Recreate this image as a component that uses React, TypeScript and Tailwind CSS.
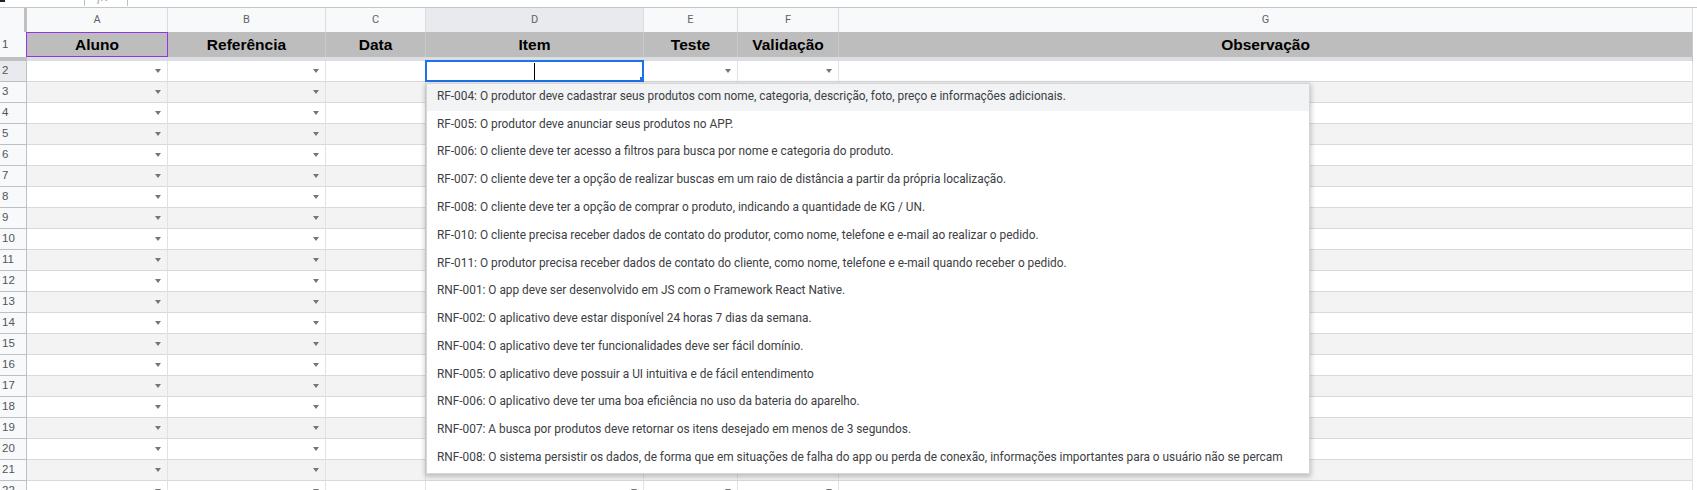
import React from 'react';

const widths = [27, 141, 158, 100, 218, 94, 101, 854];
const letters = ['', 'A', 'B', 'C', 'D', 'E', 'F', 'G'];
const titles = ['Aluno', 'Referência', 'Data', 'Item', 'Teste', 'Validação', 'Observação'];
// columns that carry a dropdown chip (index into widths)
const withArrow = [1, 2, 4, 5, 6];

const items = [
  'RF-004: O produtor deve cadastrar seus produtos com nome, categoria, descrição, foto, preço e informações adicionais.',
  'RF-005: O produtor deve anunciar seus produtos no APP.',
  'RF-006: O cliente deve ter acesso a filtros para busca por nome e categoria do produto.',
  'RF-007: O cliente deve ter a opção de realizar buscas em um raio de distância a partir da própria localização.',
  'RF-008: O cliente deve ter a opção de comprar o produto, indicando a quantidade de KG / UN.',
  'RF-010: O cliente precisa receber dados de contato do produtor, como nome, telefone e e-mail ao realizar o pedido.',
  'RF-011: O produtor precisa receber dados de contato do cliente, como nome, telefone e e-mail quando receber o pedido.',
  'RNF-001: O app deve ser desenvolvido em JS com o Framework React Native.',
  'RNF-002: O aplicativo deve estar disponível 24 horas 7 dias da semana.',
  'RNF-004: O aplicativo deve ter funcionalidades deve ser fácil domínio.',
  'RNF-005: O aplicativo deve possuir a UI intuitiva e de fácil entendimento',
  'RNF-006: O aplicativo deve ter uma boa eficiência no uso da bateria do aparelho.',
  'RNF-007: A busca por produtos deve retornar os itens desejado em menos de 3 segundos.',
  'RNF-008: O sistema persistir os dados, de forma que em situações de falha do app ou perda de conexão, informações importantes para o usuário não se percam',
];

function Arrow() {
  return <div className="h-0 w-0 border-x-[3.5px] border-t-[4px] border-x-transparent border-t-[#757575]" />;
}

function DataRow({ n }: { n: number }) {
  const band = n % 2 === 1 ? 'bg-[#f3f3f3]' : 'bg-white';
  return (
    <div className="flex h-[21px]">
      <div
        style={{ width: widths[0] }}
        className={`flex shrink-0 items-center border-r border-b border-[#c0c0c0] pl-[2px] text-[11.5px] text-[#555] ${n === 2 ? 'bg-[#e8eaed]' : 'bg-[#f8f9fa]'}`}
      >
        {n}
      </div>
      {widths.slice(1).map((w, i) => {
        const col = i + 1;
        const editing = n === 2 && col === 4;
        return (
          <div
            key={col}
            style={{ width: w }}
            className={`relative flex shrink-0 items-center justify-end border-r border-b border-r-[#e2e2e2] border-b-[#dadada] pr-[6px] ${editing ? 'bg-white' : band}`}
          >
            {withArrow.includes(col) && !editing && <Arrow />}
            {editing && (
              <div className="absolute -top-[1px] -left-[1px] -right-[1px] -bottom-[1px] flex items-center justify-center border-2 border-[#1a73e8]">
                <div className="h-[17px] w-[1px] bg-black" />
                <div className="absolute -right-[3px] -bottom-[3px] h-[6px] w-[5px] bg-[#1a73e8]" />
              </div>
            )}
          </div>
        );
      })}
    </div>
  );
}

export default function App() {
  const rows = Array.from({ length: 21 }, (_, i) => i + 2);
  return (
    <div className="relative h-[490px] w-[1697px] overflow-hidden bg-white [font-family:'Liberation_Sans',Arial,sans-serif]">
      {/* formula bar remnant */}
      <div className="flex h-[8px] border-b border-[#c4c7c5]">
        <div className="relative h-[6px] w-[85px] border-r border-[#c0c0c0]">
          <div className="absolute left-0 top-0 h-[2px] w-[5px] bg-[#202124]" />
        </div>
        <div className="h-[6px] w-[43px] overflow-hidden border-r border-[#c0c0c0] pl-[12px]">
          <div className="-mt-[12px] text-[15px] italic leading-[16px] text-[#b0b0b0] [font-family:'Liberation_Serif',serif]">fx</div>
        </div>
      </div>

      <div className="flex">
        <div className="w-[1693px] border-r border-[#c0c0c0]">
          {/* column letters */}
          <div className="flex h-[24px]">
            {widths.map((w, i) => (
              <div
                key={i}
                style={{ width: w }}
                className={`flex shrink-0 items-center justify-center text-[11px] text-[#5f6368] [font-family:Roboto,Arial,sans-serif] ${
                  i === 0
                    ? 'border-r-[3px] border-[#c0c0c0] bg-[#f8f9fa]'
                    : i === 4
                    ? 'border-r border-[#dadce0] bg-[#e8eaed]'
                    : 'border-r border-[#dadce0] bg-[#f8f9fa]'
                }`}
              >
                {letters[i]}
              </div>
            ))}
          </div>

          {/* header row */}
          <div className="flex h-[25px]">
            <div
              style={{ width: widths[0] }}
              className="flex shrink-0 items-center border-r border-[#c0c0c0] bg-[#f8f9fa] pl-[2px] text-[11.5px] text-[#555]"
            >
              1
            </div>
            {titles.map((t, i) => (
              <div
                key={t}
                style={{ width: widths[i + 1] }}
                className="relative flex shrink-0 items-center justify-center border-r border-[#c9c9c9] bg-[#bdbdbd] text-[15.5px] font-bold text-black"
              >
                {t}
                {i === 0 && <div className="absolute -left-[1px] top-0 -right-[1px] bottom-0 border border-[#9334e6]" />}
              </div>
            ))}
          </div>

          {/* freeze bar */}
          <div className="flex h-[4px]">
            <div style={{ width: widths[0] }} className="shrink-0 bg-[#c0c0c0]" />
            <div className="flex-1 bg-[#dadde2]" />
          </div>

          {rows.map((n) => (
            <DataRow key={n} n={n} />
          ))}
        </div>
        <div className="flex-1 bg-white" />
      </div>

      {/* data validation dropdown */}
      <div className="absolute left-[426px] top-[83px] w-[884px] border border-[#d6d6d6] bg-white pb-[1px] shadow-[0_2px_5px_1px_rgba(0,0,0,0.22)] [font-family:Roboto,Arial,sans-serif]">
        {items.map((t, i) => (
          <div
            key={t}
            className={`flex items-center whitespace-nowrap pl-[10px] text-[11.85px] text-[#3c4043] ${i === 0 ? 'h-[26.5px] bg-[#f1f3f4]' : 'h-[27.8px]'}`}
          >
            {t}
          </div>
        ))}
      </div>
    </div>
  );
}
